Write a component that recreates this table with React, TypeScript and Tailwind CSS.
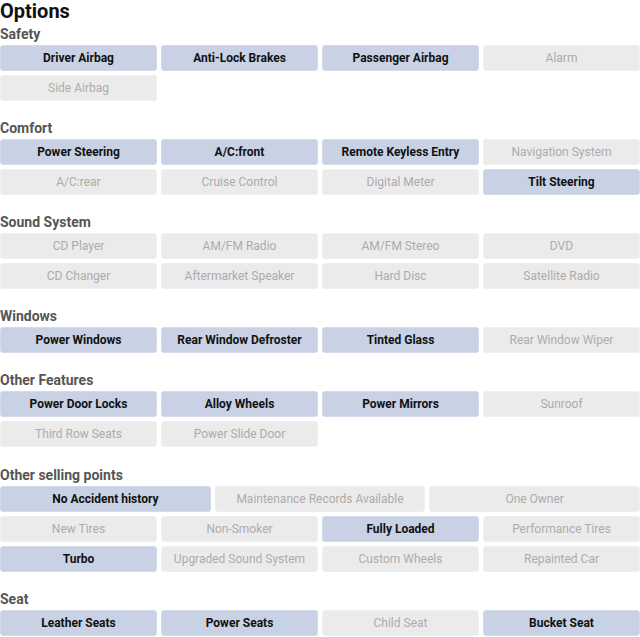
import React from 'react';

type Opt = { label: string; on?: boolean; wide?: boolean };

const sections: { title: string; items: Opt[] }[] = [
  {
    title: 'Safety',
    items: [
      { label: 'Driver Airbag', on: true },
      { label: 'Anti-Lock Brakes', on: true },
      { label: 'Passenger Airbag', on: true },
      { label: 'Alarm' },
      { label: 'Side Airbag' },
    ],
  },
  {
    title: 'Comfort',
    items: [
      { label: 'Power Steering', on: true },
      { label: 'A/C:front', on: true },
      { label: 'Remote Keyless Entry', on: true },
      { label: 'Navigation System' },
      { label: 'A/C:rear' },
      { label: 'Cruise Control' },
      { label: 'Digital Meter' },
      { label: 'Tilt Steering', on: true },
    ],
  },
  {
    title: 'Sound System',
    items: [
      { label: 'CD Player' },
      { label: 'AM/FM Radio' },
      { label: 'AM/FM Stereo' },
      { label: 'DVD' },
      { label: 'CD Changer' },
      { label: 'Aftermarket Speaker' },
      { label: 'Hard Disc' },
      { label: 'Satellite Radio' },
    ],
  },
  {
    title: 'Windows',
    items: [
      { label: 'Power Windows', on: true },
      { label: 'Rear Window Defroster', on: true },
      { label: 'Tinted Glass', on: true },
      { label: 'Rear Window Wiper' },
    ],
  },
  {
    title: 'Other Features',
    items: [
      { label: 'Power Door Locks', on: true },
      { label: 'Alloy Wheels', on: true },
      { label: 'Power Mirrors', on: true },
      { label: 'Sunroof' },
      { label: 'Third Row Seats' },
      { label: 'Power Slide Door' },
    ],
  },
  {
    title: 'Other selling points',
    items: [
      { label: 'No Accident history', on: true, wide: true },
      { label: 'Maintenance Records Available', wide: true },
      { label: 'One Owner', wide: true },
      { label: 'New Tires' },
      { label: 'Non-Smoker' },
      { label: 'Fully Loaded', on: true },
      { label: 'Performance Tires' },
      { label: 'Turbo', on: true },
      { label: 'Upgraded Sound System' },
      { label: 'Custom Wheels' },
      { label: 'Repainted Car' },
    ],
  },
  {
    title: 'Seat',
    items: [
      { label: 'Leather Seats', on: true },
      { label: 'Power Seats', on: true },
      { label: 'Child Seat' },
      { label: 'Bucket Seat', on: true },
    ],
  },
];

const Chip: React.FC<{ opt: Opt }> = ({ opt }) => (
  <div
    className={`${opt.wide ? 'col-span-4' : 'col-span-3'} h-[26px] flex items-center justify-center rounded-[3px] border text-[12px] whitespace-nowrap ${
      opt.on
        ? 'bg-[#c8d2e4] border-[#d3dbea] text-[#111] font-bold'
        : 'bg-[#ebebeb] border-[#efefef] text-[#ababab]'
    }`}
  >
    {opt.label}
  </div>
);

export default function App() {
  return (
    <div className="w-[640px] bg-white font-['Roboto',sans-serif]">
      <h1 className="text-[20px] leading-[22px] font-bold text-[#111]">Options</h1>
      {sections.map((s, i) => (
        <section
          key={s.title}
          className={i === 0 ? 'mt-[2px]' : s.title === 'Other selling points' ? 'mt-[18px]' : 'mt-[17px]'}
        >
          <h2 className="text-[14px] leading-[20px] font-bold text-[#555] mb-px">{s.title}</h2>
          <div className="grid grid-cols-12 gap-1">
            {s.items.map((o) => (
              <Chip key={o.label} opt={o} />
            ))}
          </div>
        </section>
      ))}
    </div>
  );
}
